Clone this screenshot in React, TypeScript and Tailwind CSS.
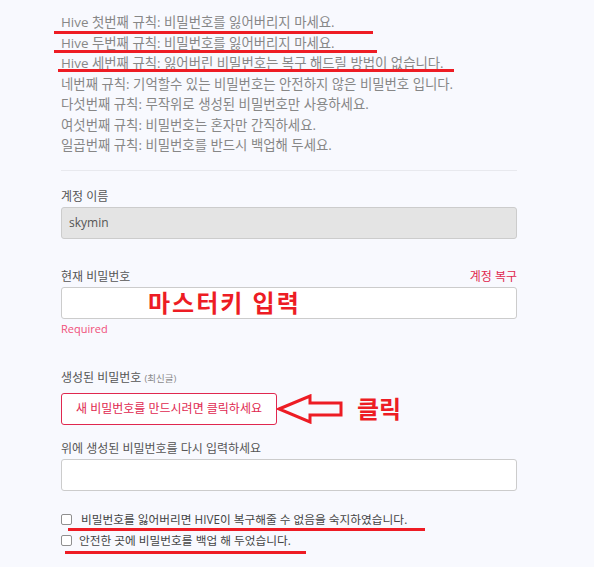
import React from 'react';

/* Hive password rules + change-password form, with red hand-drawn annotations */

const RULES = [
  'Hive 첫번째 규칙: 비밀번호를 잃어버리지 마세요.',
  'Hive 두번째 규칙: 비밀번호를 잃어버리지 마세요.',
  'Hive 세번째 규칙: 잃어버린 비밀번호는 복구 해드릴 방법이 없습니다.',
  '네번째 규칙: 기억할수 있는 비밀번호는 안전하지 않은 비밀번호 입니다.',
  '다섯번째 규칙: 무작위로 생성된 비밀번호만 사용하세요.',
  '여섯번째 규칙: 비밀번호는 혼자만 간직하세요.',
  '일곱번째 규칙: 비밀번호를 반드시 백업해 두세요.',
];

/* red marker strokes drawn over the screenshot */
const MARKS = [
  { top: 31, left: 54, width: 319 },
  { top: 50, left: 54, width: 323 },
  { top: 69, left: 58, width: 396 },
  { top: 528, left: 68, width: 357 },
  { top: 551, left: 65, width: 241 },
];

function Label({ children }: { children: React.ReactNode }) {
  return <div className="text-[12px] leading-[20px] text-[#555]">{children}</div>;
}

function Check({ children, indent }: { children: React.ReactNode; indent?: boolean }) {
  return (
    <label className="flex items-center text-[11.7px] leading-[21px] text-[#444]">
      <span className="w-[11px] h-[11px] shrink-0 rounded-[2px] border border-[#8f8f8f] bg-white" />
      <span className={`whitespace-nowrap ${indent ? 'ml-[9px]' : 'ml-[7px]'}`}>{children}</span>
    </label>
  );
}

export default function App() {
  return (
    <div
      className="relative w-[594px] h-[567px] overflow-hidden bg-[#f8f9fe]"
      style={{ fontFamily: '"Open Sans", "Noto Sans CJK KR", sans-serif' }}
    >
      <div className="w-[517px] pl-[61px] pt-[12px] flex flex-col">
        {/* ── Rules ───────────────────────────────────────────── */}
        <div className="flex flex-col text-[13.4px] leading-[20.5px] text-[#878787]">
          {RULES.map((r) => (
            <div key={r} className="whitespace-nowrap">{r}</div>
          ))}
        </div>

        <div className="mt-[14px] h-px bg-[#e8e9ee]" />

        {/* ── Account name ────────────────────────────────────── */}
        <div className="mt-[16px]">
          <Label>계정 이름</Label>
          <div className="h-[32px] rounded-[3px] border border-[#cccccc] bg-[#e4e4e4] px-[7px] flex items-center text-[12px] text-[#555]">
            skymin
          </div>
        </div>

        {/* ── Current password ────────────────────────────────── */}
        <div className="mt-[28px]">
          <div className="flex justify-between">
            <Label>현재 비밀번호</Label>
            <span className="text-[12px] leading-[20px] text-[#e0284f]">계정 복구</span>
          </div>
          <div className="h-[32px] rounded-[3px] border border-[#cccccc] bg-white pl-[86px] flex items-center">
            <span className="text-[24px] font-bold tracking-[2px] text-[#ed1c24] leading-none">마스터키 입력</span>
          </div>
          <div className="text-[11px] leading-[20px] text-[#f0507a]">Required</div>
        </div>

        {/* ── Generated password ──────────────────────────────── */}
        <div className="mt-[29px]">
          <Label>
            생성된 비밀번호 <span className="text-[9.5px] text-[#8a8a8a]">(최신글)</span>
          </Label>
          <div className="mt-[4px] flex items-center">
            <button className="w-[216px] h-[32px] rounded-[3px] border border-[#e0284f] bg-white text-[12px] text-[#e0284f]">
              새 비밀번호를 만드시려면 클릭하세요
            </button>
            <svg width="68" height="30" viewBox="0 0 68 30" className="shrink-0">
              <polygon
                points="2,15 33,2 33,9 64,9 64,21 33,21 33,28"
                fill="none"
                stroke="#ed1c24"
                strokeWidth="3"
                strokeLinejoin="miter"
              />
            </svg>
            <span className="ml-[12px] text-[24px] font-bold text-[#ed1c24] leading-none">클릭</span>
          </div>
        </div>

        {/* ── Repeat password ─────────────────────────────────── */}
        <div className="mt-[14px]">
          <Label>위에 생성된 비밀번호를 다시 입력하세요</Label>
          <div className="h-[32px] rounded-[3px] border border-[#cccccc] bg-white" />
        </div>

        {/* ── Confirmations ───────────────────────────────────── */}
        <div className="mt-[18px] flex flex-col">
          <Check indent>비밀번호를 잃어버리면 HIVE이 복구해줄 수 없음을 숙지하였습니다.</Check>
          <Check>안전한 곳에 비밀번호를 백업 해 두었습니다.</Check>
        </div>
      </div>

      {/* red underline marks (overlay) */}
      {MARKS.map((m) => (
        <div
          key={m.top}
          className="absolute h-[3px] bg-[#ee1c24]"
          style={{ top: m.top, left: m.left, width: m.width }}
        />
      ))}
    </div>
  );
}
